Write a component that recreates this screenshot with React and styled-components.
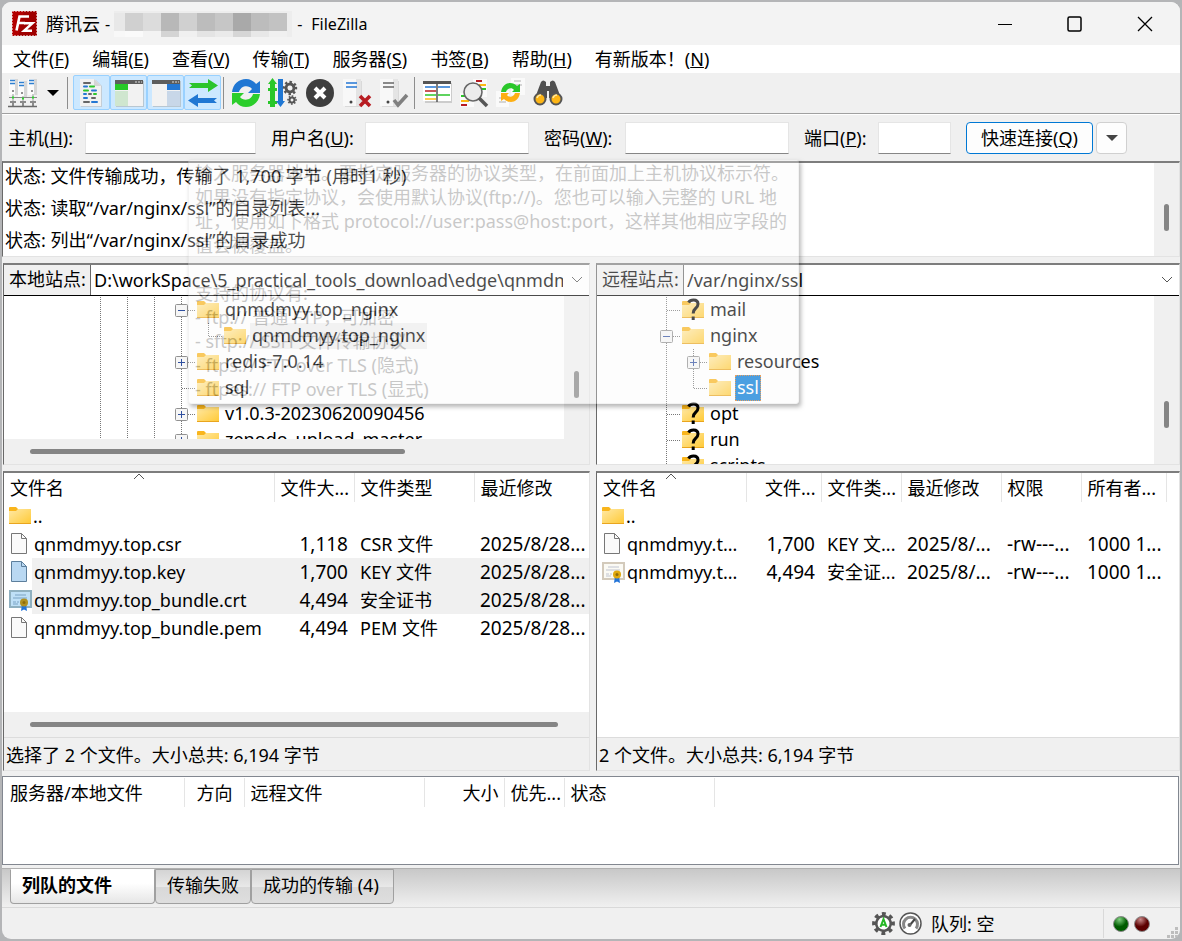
import * as React from "react";
import styled, { createGlobalStyle, css } from "styled-components";

const GlobalStyle = createGlobalStyle`
  * {
    box-sizing: border-box;
  }

  body {
    margin: 0;
    background: #b4b5b7;
    color: #000;
    font-family: "Noto Sans", "Noto Sans CJK SC", sans-serif;
    font-size: 18px;
    line-height: 26px;
  }

  button,
  input,
  select {
    font: inherit;
    color: inherit;
  }
`;

const Desktop = styled.div`
  padding: 2px;
`;

const Window = styled.div`
  display: flex;
  flex-direction: column;
  min-height: calc(100vh - 4px);
  background: #f0f0f0;
  border-radius: 9px;
  overflow: hidden;
`;

/* title bar */

const TitleBar = styled.header`
  display: flex;
  align-items: center;
  height: 43px;
  padding-left: 10px;
  background: #f3f3f3;
`;

const Title = styled.h1`
  display: flex;
  align-items: center;
  flex: 1;
  margin: 0 0 0 9px;
  font-size: 18px;
  font-weight: normal;
  line-height: 24px;
`;

const TitleLatin = styled.span`
  font-size: 16px;
  padding: 0 4px 0 5px;
`;

const WindowButton = styled.button`
  display: flex;
  align-items: center;
  justify-content: center;
  width: 70px;
  height: 43px;
  padding: 0;
  border: 0;
  background: none;
`;

/* menu */

const MenuBar = styled.nav`
  display: flex;
  height: 28px;
  background: #fff;
`;

const MenuItem = styled.button`
  padding: 0 12px 0 11px;
  border: 0;
  background: none;
  white-space: nowrap;
`;

/* tool bar */

const ToolBar = styled.div`
  display: flex;
  align-items: center;
  height: 42px;
  padding: 0 0 2px 2px;
  border-bottom: 1px solid #fff;
  box-shadow: inset 0 -1px 0 #a0a0a0;
`;

const ToolButton = styled.button`
  display: flex;
  align-items: center;
  justify-content: center;
  width: 37px;
  height: 35px;
  padding: 0;
  border: 1px solid ${p => (p.$on ? "#99d1ff" : "transparent")};
  border-radius: 2px;
  background: ${p => (p.$on ? "#cce8ff" : "none")};
`;

const ToolArrow = styled(ToolButton)`
  width: 24px;
`;

const Separator = styled.span`
  width: 1px;
  height: 32px;
  margin: 0 ${p => (p.$wide ? 5 : 3)}px 0 2px;
  background: #8d8d8d;
`;

/* quick connect */

const QuickBar = styled.form`
  position: relative;
  display: flex;
  align-items: center;
  height: 46px;
  padding-left: 6px;
`;

const FieldLabel = styled.label`
  width: ${p => p.$width}px;
  white-space: nowrap;
`;

const Field = styled.input`
  width: ${p => p.$width}px;
  height: 32px;
  margin-right: 15px;
  padding: 0 6px;
  border: 1px solid #e5e5e5;
  border-bottom-color: #868686;
  background: #fff;
  outline: none;
`;

const ConnectButton = styled.button`
  width: 127px;
  height: 32px;
  padding: 0;
  border: 1px solid #0078d4;
  border-radius: 4px;
  background: #fdfdfd;
`;

const ConnectArrow = styled(ConnectButton)`
  display: flex;
  align-items: center;
  justify-content: center;
  width: 31px;
  margin-left: 3px;
  border-color: #d0d0d0;
`;

const Tooltip = styled.div`
  position: absolute;
  z-index: 2;
  top: 44px;
  left: 186px;
  padding: 1px 6px;
  width: 611px;
  height: 245px;
  border: 1px solid #d8d8d8;
  border-radius: 3px;
  background: #f9f9f9;
  color: #4a4a4a;
  opacity: 0.3;
  box-shadow: 2px 3px 4px rgba(0, 0, 0, 0.9);
  line-height: 24px;
  white-space: pre;
  pointer-events: none;
`;

/* panes */

const sunken = css`
  border: 1px solid #e3e3e3;
  border-top: 2px solid #7d7d7d;
  border-left-color: #696969;
  background: #fff;
`;

const Log = styled.div`
  display: flex;
  ${sunken}
`;

const LogLines = styled.div`
  display: flex;
  flex: 1;
  flex-direction: column;
  gap: 6px;
  padding: 0 0 3px 2px;
`;

const Gutter = styled.div`
  width: 25px;
  background: #f0f0f0;
`;

const Thumb = styled.div`
  width: 5px;
  height: 27px;
  margin: ${p => p.$top}px 0 0 10px;
  border-radius: 3px;
  background: #858585;
`;

const HorizontalGutter = styled.div`
  flex: none;
  height: 25px;
  padding: 10px 31px 0 26px;
  background: #f0f0f0;
`;

const HorizontalThumb = styled.div`
  width: ${p => p.$percent}%;
  height: 5px;
  border-radius: 3px;
  background: #858585;
`;

const Split = styled.div`
  display: grid;
  grid-template-columns: minmax(0, 587fr) minmax(0, 584fr);
  gap: 6px;
  margin: 6px 0 0 1px;
  flex: ${p => (p.$grow ? 1 : "none")};
`;

const Pane = styled.section`
  display: flex;
  flex-direction: column;
  ${sunken}
`;

const SiteBar = styled.div`
  display: flex;
  height: 31px;
  border-bottom: 1px solid #000;
`;

const SiteLabel = styled.label`
  width: 87px;
  padding: 1px 0 0 5px;
  border-right: 1px solid #696969;
  background: #f0f0f0;
  white-space: nowrap;
`;

const Combo = styled.div`
  display: grid;
  flex: 1;
  min-width: 0;
  align-items: center;

  > * {
    grid-area: 1 / 1;
  }

  svg {
    justify-self: end;
    margin-right: 5px;
    pointer-events: none;
  }
`;

const SiteSelect = styled.select`
  appearance: none;
  width: 100%;
  height: 30px;
  padding: 0 26px 0 3px;
  border: 0;
  background: #fff;
  outline: none;
`;

const TreeArea = styled.div`
  display: flex;
  height: ${p => (p.$scroll ? 143 : 168)}px;
`;

const Tree = styled.div`
  flex: 1;
  min-width: 0;
  overflow: hidden;
  padding: 1px 0 0 ${p => p.$indent}px;
`;

const TreeRow = styled.div`
  display: flex;
  align-items: center;
  height: 26px;

  svg {
    flex: none;
  }
`;

const TreeIcon = styled.span`
  display: flex;
  margin: 0 4px 0 2px;
`;

const TreeLabel = styled.span`
  padding: 0 2px;
  height: 26px;
  line-height: 25px;
  white-space: nowrap;
  ${p => p.$state === "dim" && "background: #f0f0f0;"}
  ${p =>
    p.$state === "active" &&
    `
    background: #0078d7;
    color: #fff;
    outline: 1px dotted #e07b20;
    outline-offset: -1px;
  `}
`;

/* file lists */

const ListArea = styled.div`
  flex: 1;
  background: #fff;
  overflow: hidden;
`;

const FileTable = styled.table`
  width: ${p => (p.$fixed ? `${p.$fixed}px` : "100%")};
  border-collapse: collapse;
  table-layout: fixed;
`;

const HeadCell = styled.th`
  position: relative;
  height: 29px;
  padding: 0 5px 0 6px;
  border-right: 1px solid #e5e5e5;
  font-weight: normal;
  text-align: ${p => p.$align || "left"};
  white-space: nowrap;

  &:last-child {
    border-right-color: ${p => (p.$open ? "transparent" : "#e5e5e5")};
  }
`;

const SortMark = styled.svg`
  position: absolute;
  top: 0;
  left: calc(50% - 6px);
`;

const Cell = styled.td`
  height: 28px;
  padding: 0 0 0 6px;
  font-size: ${p => (p.$latin ? 19 : 18)}px;
  text-align: ${p => p.$align || "left"};
  padding-right: ${p => (p.$align ? 6 : 0)}px;
  background: ${p => (p.$selected ? "#f0f0f0" : "none")};
  white-space: nowrap;
`;

const NameCell = styled(Cell)`
  padding: 0;
  background: ${p =>
    p.$selected ? "linear-gradient(to right, #fff 28px, #f0f0f0 28px)" : "none"};
`;

const FileName = styled.div`
  display: flex;
  align-items: center;
  gap: 2px;
  padding-left: 5px;
`;

const ListStatus = styled.div`
  height: 33px;
  padding: 4px 0 0 2px;
  border-top: 1px solid #dcdcdc;
  background: #f0f0f0;
`;

/* queue and tabs */

const Queue = styled.section`
  height: 89px;
  margin: 5px 1px 0 0;
  padding: 1px 0 0 1px;
  border: 1px solid #828790;
  background: #fff;
`;

const TabStrip = styled.div`
  display: flex;
  align-items: flex-start;
  height: 39px;
  margin-top: 3px;
  padding-left: 8px;
  border-top: 1px solid #b0b0b0;
  background: linear-gradient(#c8c8c8, #f0f0f0);
`;

const Tab = styled.button`
  height: 35px;
  padding: 0 ${p => (p.$active ? 42 : 14)}px 4px 11px;
  border: 1px solid #a0a0a0;
  border-top-color: ${p => (p.$active ? "#fff" : "#a0a0a0")};
  border-radius: 0 0 4px 4px;
  background: ${p =>
    p.$active
      ? "linear-gradient(#fff 40%, #e6e6e6)"
      : "linear-gradient(#d4d4d4, #e8e8e8 50%, #d8d8d8 50%, #dedede)"};
  font-weight: ${p => (p.$active ? "bold" : "normal")};
  white-space: nowrap;
`;

const NarrowTab = styled(Tab)`
  padding: 0 11px 4px;
`;

const StatusBar = styled.footer`
  display: flex;
  align-items: center;
  justify-content: flex-end;
  gap: 4px;
  height: 32px;
  border-top: 1px solid #d9d9d9;
`;

const QueueState = styled.span`
  width: 173px;
  padding-left: 5px;
`;

const Lamps = styled.span`
  display: flex;
  align-items: center;
  gap: 5px;
  height: 29px;
  padding: 0 2px 0 9px;
  border-left: 1px solid #d9d9d9;
`;

const Grip = styled.svg`
  align-self: flex-end;
  margin-left: 11px;
`;

/* mosaic colours over the hidden address */
const MOSAIC = [
  "#e8e8e8", "#d0d0d0", "#dcdcdc", "#b8b8b8", "#d0d0d0",
  "#bcbcbc", "#c6c6c6", "#a9a9a9", "#bcbcbc", "#c2c2c2"
];
const MOSAIC_LOW = [
  "#f8f8f8", "#fafafa", "#f3f3f3", "#d4d4d4", "#f0f0f0",
  "#e4e4e4", "#eaeaea", "#d6d6d6", "#e8e8e8", "#f0f0f0"
];

function Mosaic() {
  return (
    <svg width="178" height="26" viewBox="0 0 178 26">
      <rect width="178" height="26" fill="#ededed" />
      {MOSAIC.map((color, i) => (
        <g key={i}>
          <rect x={i * 18 - 7} y="2" width="18" height="18" fill={color} />
          <rect x={i * 18 - 7} y="20" width="18" height="6" fill={MOSAIC_LOW[i]} />
        </g>
      ))}
    </svg>
  );
}

function Logo() {
  return (
    <svg width="25" height="25" viewBox="0 0 25 25">
      <rect width="25" height="25" fill="#b30000" />
      <path d="M12 0h13v25H6z" fill="#8c0000" opacity=".5" />
      <rect x=".5" y=".5" width="24" height="24" fill="none" stroke="#fff" strokeDasharray="1 2" />
      <g fill="none" stroke="#fff" strokeWidth="2.6">
        <path d="M4.5 19.5 7.5 5.5H17M6 12h7" />
        <path d="M12 12.2h8.5L12 19.8h8" strokeWidth="2.4" />
      </g>
    </svg>
  );
}

function Folder({ unknown }) {
  return (
    <svg width="22" height="26" viewBox="0 0 22 26">
      <defs>
        <linearGradient id="folder" x1="0" y1="0" x2="1" y2="1">
          <stop offset="0" stopColor="#ffe9a6" />
          <stop offset="1" stopColor="#ffc934" />
        </linearGradient>
      </defs>
      <path d="M0 5q0-1 1-1h6l2 2h13v3H0z" fill="#f9b51c" />
      <path d="M0 8h7l2-2h13v15H0z" fill="url(#folder)" />
      <path d="M0 20.5h22" stroke="#e9a51e" />
      {unknown && (
        <g fill="none" stroke="#000" strokeWidth="3">
          <path d="M6.5 5.5Q8 3 11.500 3q4.500 0 4.500 4 0 2.500-2.500 4.500-2.300 1.800-2.300 5" />
          <path d="M11.200 19.500v3.500" />
        </g>
      )}
    </svg>
  );
}

function Guide({ kind }) {
  const box = kind === "plus" || kind === "minus";
  return (
    <svg width="27" height="26" viewBox="0 0 27 26">
      <g stroke="#777" strokeDasharray="1 1">
        <path d={kind === "end" ? "M13.500 0v13" : "M13.500 0v26"} />
        {kind !== "line" && <path d="M14 13.500h13" />}
      </g>
      {box && (
        <>
          <rect x="7.500" y="7.500" width="12" height="12" rx="1" fill="#f6f6f6" stroke="#919191" />
          <path
            d={kind === "plus" ? "M10 13.500h7M13.500 10v7" : "M10 13.500h7"}
            stroke="#2f4f9f"
          />
        </>
      )}
    </svg>
  );
}

function Page({ blue }) {
  return (
    <svg width="23" height="26" viewBox="0 0 23 26">
      <path
        d="M2.500 2.500h10l5 5v15h-15z"
        fill={blue ? "#b9d8f2" : "#fafafa"}
        stroke={blue ? "#5d7f9c" : "#777"}
      />
      <path d="M12.500 2.500v5h5" fill="none" stroke={blue ? "#5d7f9c" : "#777"} />
    </svg>
  );
}

function Certificate({ blue }) {
  return (
    <svg width="23" height="26" viewBox="0 0 23 26">
      <rect
        x="1"
        y="4"
        width="21"
        height="16"
        fill={blue ? "#bfe0f7" : "#fbfaf4"}
        stroke={blue ? "#8fb0c0" : "#d3cabb"}
        strokeWidth="2"
      />
      <path
        d="M6 8h11M4 11h14M4 15h3m1 0h2M4 17h5"
        stroke={blue ? "#7ba3c4" : "#c0c4d0"}
      />
      <path d="M13 17l-1 7 3-1.500L18 24l-1-7z" fill="#2374d8" />
      <circle cx="15" cy="15.500" r="4" fill={blue ? "#b09020" : "#e0a80d"} />
      <circle cx="15" cy="15.500" r="1.500" fill="#8e6b0a" />
    </svg>
  );
}

function Chevron() {
  return (
    <svg width="14" height="8" viewBox="0 0 14 8">
      <path d="M2 1l5 5 5-5" fill="none" stroke="#555" />
    </svg>
  );
}

function Caret({ color }) {
  return (
    <svg width="14" height="8" viewBox="0 0 14 8">
      <path d="M1 1h12L7 7z" fill={color} />
    </svg>
  );
}

/* ring of eight teeth round a solid body, the hole is left to the caller */
function Gear({ x, y, r, hole }) {
  const tooth = (Math.PI * 2 * r) / 16;
  return (
    <g transform={`translate(${x} ${y}) rotate(-11)`} fill="none">
      <circle r={r} stroke="#555" strokeWidth={r * 0.4} strokeDasharray={tooth} />
      <circle r={(r * 0.9 + hole) / 2} stroke="#555" strokeWidth={r * 0.9 - hole} />
    </g>
  );
}

function Icon({ children }) {
  return (
    <svg width="30" height="30" viewBox="0 0 30 30">
      {children}
    </svg>
  );
}

const serverBody = (
  <>
    <path d="M3 3h17v26H3z" fill="#d9d9d9" />
    <path d="M1 1h18v27H1z" fill="#f8f8f8" />
    <path d="M14 1h5v27h-5z" fill="#e4e4e4" />
  </>
);

const icons = {
  sites: (
    <Icon>
      {[1, 10, 20].map((x, i) => (
        <g key={x} transform={`translate(${x} ${i === 1 ? 3 : 1})`}>
          <path d="M0 0h6v16H0z" fill="#fbfbfb" />
          <path d="M6 0h3v16H6z" fill="#d6d6d6" />
          <path d="M1 1.500h5M1 4.500h5" stroke="#2f7fd0" strokeWidth="1.300" />
          <path d="M4 11v2" stroke="#555" strokeWidth="1.300" />
        </g>
      ))}
      <path d="M5 16v7M15 18v5M25 16v7" stroke="#999" />
      <path d="M1 19.500h28" stroke="#888" />
      <path d="M2 24h6M12 24h6M22 24h6M0 28.500h29M5 25v3M15 25v3M25 25v3" stroke="#6a6a6a" strokeWidth="1.500" />
      <path d="M4 19.500h2M14 20.500h2M24 19.500h2" stroke="#2bd42b" strokeWidth="2" />
    </Icon>
  ),
  log: (
    <Icon>
      <path d="M4 2h15l6 6v21H4z" fill="#c3cdd6" />
      <path d="M3 1h14l7 7v20H3z" fill="#f1f1f1" />
      <path d="M17 1v7h7z" fill="#d5d5d5" />
      <g strokeWidth="2" strokeLinecap="round">
        <path d="M7 5h6M12 16h2M15 20h3M7 24h5" stroke="#666" />
        <path d="M7 8.500h3M15 12.500h4M7 16h2M7 20h3M15 24h5" stroke="#2477d3" />
        <path d="M13 8.500h4M7 12.500h4M17 16h2" stroke="#2bc52b" />
      </g>
    </Icon>
  ),
  localTree: (
    <Icon>
      <path d="M2 3h28v26H2z" fill="#b8c7d2" />
      <path d="M1 2h28v26H1z" fill="#f2f2f2" />
      <path d="M1 2h28v4H1z" fill="#5d5d5d" />
      <path d="M1 6h13v6H1z" fill="#27c827" />
      <path d="M1 13h13v15H1z" fill="#cfe6cf" />
      <path d="M21 4h2m1 0h2m1 0h1" stroke="#ddd" />
    </Icon>
  ),
  remoteTree: (
    <Icon>
      <path d="M2 3h28v26H2z" fill="#b8c7d2" />
      <path d="M1 6h28v22H1z" fill="#f2f2f2" />
      <path d="M1 2h28v4H1z" fill="#5d5d5d" />
      <path d="M16 6h13v6H16z" fill="#2477d3" />
      <path d="M16 13h13v15H16z" fill="#c8d7e8" />
      <path d="M21 4h2m1 0h2m1 0h1" stroke="#ddd" />
    </Icon>
  ),
  queue: (
    <Icon>
      <path d="M1 5h19V1l10 6.500L20 14v-4H1l3-2.500z" fill="#2cc52c" />
      <path d="M29 20H10v-4L0 22.500 10 29v-4h19l-3-2.500z" fill="#2077d3" />
    </Icon>
  ),
  refresh: (
    <Icon>
      <path d="M1 14C2 6 8 1 15 1c4 0 8 2 10 5l4-3v12H17l4-4c-3-4-11-4-13 3z" fill="#2077d3" />
      <path d="M29 16c-1 8-7 13-14 13-4 0-8-2-10-5l-4 3V15h12l-4 4c3 4 11 4 13-3z" fill="#2cce2c" />
    </Icon>
  ),
  process: (
    <Icon>
      <path d="M4.500 0 9 6H7v4h2v3H7v10h2v3H7v3H2v-3H0v-3h2V13H0v-3h2V6H0z" fill="#2ac72a" />
      <path d="M12.500 29 17 23h-2V1h-5v22H8z" fill="#2077d3" />
      <Gear x={22} y={10} r={6} hole={2.5} />
      <Gear x={24} y={22} r={4} hole={1.5} />
    </Icon>
  ),
  cancel: (
    <Icon>
      <circle cx="15" cy="15" r="14" fill="#3e3e3e" />
      <path d="M10 10l10 10M20 10L10 20" stroke="#fff" strokeWidth="4" />
    </Icon>
  ),
  disconnect: (
    <Icon>
      {serverBody}
      <path d="M4 5h11M4 9h11" stroke="#2477d3" strokeWidth="1.600" />
      <circle cx="9" cy="24" r="1.500" fill="#444" />
      <path d="M18 18l10 10M28 18L18 28" stroke="#b81c22" strokeWidth="3.600" />
    </Icon>
  ),
  reconnect: (
    <Icon>
      {serverBody}
      <path d="M4 5h11M4 9h11" stroke="#666" strokeWidth="1.600" />
      <circle cx="9" cy="24" r="1.500" fill="#444" />
      <path d="M15 22l4 5 9-10" fill="none" stroke="#808080" strokeWidth="3.600" />
    </Icon>
  ),
  filter: (
    <Icon>
      <path d="M3 5h27v20H3z" fill="#ccc" />
      <path d="M1 3h28v20H1z" fill="#fff" />
      <path d="M1 3h28v3H1z" fill="#555" />
      <g strokeWidth="1.500">
        <path d="M3 9h11m2 0h12" stroke="#2477d3" />
        <path d="M3 13h11" stroke="#b81c22" />
        <path d="M3 17h11m2 0h12" stroke="#2bc52b" />
        <path d="M3 21h11" stroke="#fdb913" />
      </g>
      <path d="M15 3v21" stroke="#555" strokeWidth="1.500" />
    </Icon>
  ),
  compare: (
    <Icon>
      <path d="M14 1h14v18H14zM1 15h14v14H1z" fill="#fafafa" />
      <g strokeWidth="2">
        <path d="M17 3h6M2 27h6" stroke="#b81c22" />
        <path d="M20 7h7M2 23h8" stroke="#fdb913" />
        <path d="M22 11h5M2 18h6" stroke="#2bc52b" />
      </g>
      <circle cx="14" cy="14" r="9" fill="#ececec" stroke="#666" strokeWidth="1.600" />
      <path d="M20 20l8 8" stroke="#555" strokeWidth="3.500" />
    </Icon>
  ),
  sync: (
    <Icon>
      <path d="M15 0h14v17H15zM0 13h13v16H0z" fill="#fafafa" />
      <path d="M18 3h7m-7 4h8M3 20h6m-6 4h7" stroke="#d5d5d5" strokeWidth="2" />
      <path d="M5 14C6 8 10 5 14 5c3 0 5 1 7 3l3-2v8h-8l2-2c-2-3-7-2-8 2z" fill="#2ac72a" />
      <path d="M24 15c-1 6-5 9-9 9-3 0-5-1-7-3l-3 2v-8h8l-2 2c2 3 7 2 8-2z" fill="#fdaf13" />
    </Icon>
  ),
  search: (
    <Icon>
      <path d="M8 4q2-3 5 0v4h4V4q3-3 5 0l6 16H16v-7h-2v7H2z" fill="#505050" />
      <circle cx="7" cy="21" r="5.500" fill="#fdb515" stroke="#555" strokeWidth="2" />
      <circle cx="23" cy="21" r="5.500" fill="#fdb515" stroke="#555" strokeWidth="2" />
      <path d="M4 20q1-3 4-3m12 3q1-3 4-3" stroke="#ffe9a0" strokeWidth="1.500" fill="none" />
    </Icon>
  )
};

const menus = [
  ["文件", "F"],
  ["编辑", "E"],
  ["查看", "V"],
  ["传输", "T"],
  ["服务器", "S"],
  ["书签", "B"],
  ["帮助", "H"],
  ["有新版本！", "N"]
];

const fields = [
  { id: "host", text: "主机", hotkey: "H", label: 77, width: 171 },
  { id: "user", text: "用户名", hotkey: "U", label: 94, width: 164 },
  { id: "pass", text: "密码", hotkey: "W", label: 81, width: 164, type: "password" },
  { id: "port", text: "端口", hotkey: "P", label: 74, width: 73 }
];

const tooltip = [
  "输入服务器地址。要指定服务器的协议类型，在前面加上主机协议标示符。",
  "如果没有指定协议，会使用默认协议(ftp://)。您也可以输入完整的 URL 地",
  "址，使用如下格式 protocol://user:pass@host:port，这样其他相应字段的",
  "值会被覆盖。",
  "",
  "支持的协议有:",
  "- ftp:// 普通 FTP，可加密",
  "- sftp:// SSH 文件传输协议",
  "- ftps:// FTP over TLS (隐式)",
  "- ftpes:// FTP over TLS (显式)"
].join("\n");

const log = [
  "状态: 文件传输成功，传输了 1,700 字节 (用时1 秒)",
  "状态: 读取“/var/nginx/ssl”的目录列表...",
  "状态: 列出“/var/nginx/ssl”的目录成功"
];

const outer = ["line", "line", "line"];

const localTree = [
  { name: "qnmdmyy.top_nginx", guides: [...outer, "minus"] },
  { name: "qnmdmyy.top_nginx", guides: [...outer, "line", "end"], state: "dim" },
  { name: "redis-7.0.14", guides: [...outer, "plus"] },
  { name: "sql", guides: [...outer, "tee"] },
  { name: "v1.0.3-20230620090456", guides: [...outer, "plus"] },
  { name: "zenodo_upload_master", guides: [...outer, "plus"] }
];

const remoteTree = [
  { name: "mail", guides: ["tee"], unknown: true },
  { name: "nginx", guides: ["minus"] },
  { name: "resources", guides: ["line", "plus"] },
  { name: "ssl", guides: ["line", "end"], state: "active" },
  { name: "opt", guides: ["tee"], unknown: true },
  { name: "run", guides: ["tee"], unknown: true },
  { name: "scripts", guides: ["tee"], unknown: true }
];

const localColumns = [
  { text: "文件名", width: 270, sorted: true },
  { text: "文件大...", width: 80, align: "right", latin: true },
  { text: "文件类型", width: 120 },
  { text: "最近修改", latin: true }
];

const localFiles = [
  { icon: <Folder />, cells: ["..", "", "", ""] },
  { icon: <Page />, cells: ["qnmdmyy.top.csr", "1,118", "CSR 文件", "2025/8/28..."] },
  {
    icon: <Page blue />,
    cells: ["qnmdmyy.top.key", "1,700", "KEY 文件", "2025/8/28..."],
    selected: true
  },
  {
    icon: <Certificate blue />,
    cells: ["qnmdmyy.top_bundle.crt", "4,494", "安全证书", "2025/8/28..."],
    selected: true
  },
  { icon: <Page />, cells: ["qnmdmyy.top_bundle.pem", "4,494", "PEM 文件", "2025/8/28..."] }
];

const remoteColumns = [
  { text: "文件名", width: 149, sorted: true },
  { text: "文件...", width: 75, align: "right", latin: true },
  { text: "文件类...", width: 80 },
  { text: "最近修改", width: 100, latin: true },
  { text: "权限", width: 80, latin: true },
  { text: "所有者...", width: 85, latin: true }
];

const remoteFiles = [
  { icon: <Folder />, cells: ["..", "", "", "", "", ""] },
  {
    icon: <Page />,
    cells: ["qnmdmyy.t...", "1,700", "KEY 文...", "2025/8/...", "-rw---...", "1000 1..."]
  },
  {
    icon: <Certificate />,
    cells: ["qnmdmyy.t...", "4,494", "安全证...", "2025/8/...", "-rw---...", "1000 1..."]
  }
];

const queueColumns = [
  { text: "服务器/本地文件", width: 180 },
  { text: "方向", width: 60, align: "center" },
  { text: "远程文件", width: 180 },
  { text: "大小", width: 80, align: "right" },
  { text: "优先...", width: 60 },
  { text: "状态", width: 150 }
];

function Hotkey({ text, letter }) {
  return (
    <>
      {text}(<u>{letter}</u>)
    </>
  );
}

function Tool({ name, label, on }) {
  return (
    <ToolButton type="button" aria-label={label} $on={on}>
      {icons[name]}
    </ToolButton>
  );
}

function SiteTree({ id, label, path, rows, indent, thumb, scroll }) {
  return (
    <Pane>
      <SiteBar>
        <SiteLabel htmlFor={id}>{label}</SiteLabel>
        <Combo>
          <SiteSelect id={id}>
            <option>{path}</option>
          </SiteSelect>
          <Chevron />
        </Combo>
      </SiteBar>
      <TreeArea $scroll={scroll}>
        <Tree $indent={indent}>
          {rows.map((row, i) => (
            <TreeRow key={i}>
              {row.guides.map((kind, n) => (
                <Guide kind={kind} key={n} />
              ))}
              <TreeIcon>
                <Folder unknown={row.unknown} />
              </TreeIcon>
              <TreeLabel $state={row.state}>{row.name}</TreeLabel>
            </TreeRow>
          ))}
        </Tree>
        <Gutter>
          <Thumb $top={thumb} />
        </Gutter>
      </TreeArea>
      {scroll && (
        <HorizontalGutter>
          <HorizontalThumb $percent={71} />
        </HorizontalGutter>
      )}
    </Pane>
  );
}

function DataTable({ columns, files = [] }) {
  const open = columns.some(column => !column.width);
  const total = columns.reduce((sum, column) => sum + (column.width || 0), 0);
  return (
    <FileTable $fixed={open ? 0 : total}>
      <colgroup>
        {columns.map(column => (
          <col key={column.text} width={column.width} />
        ))}
      </colgroup>
      <thead>
        <tr>
          {columns.map(column => (
            <HeadCell key={column.text} $align={column.align} $open={open}>
              {column.text}
              {column.sorted && (
                <SortMark width="12" height="7" viewBox="0 0 12 7">
                  <path d="M1 6l5-5 5 5" fill="none" stroke="#555" />
                </SortMark>
              )}
            </HeadCell>
          ))}
        </tr>
      </thead>
      <tbody>
        {files.map((file, i) => (
          <tr key={i}>
            <NameCell $selected={file.selected}>
              <FileName>
                {file.icon}
                {file.cells[0]}
              </FileName>
            </NameCell>
            {file.cells.slice(1).map((text, n) => (
              <Cell
                key={n}
                $align={columns[n + 1].align}
                $latin={columns[n + 1].latin}
                $selected={file.selected}
              >
                {text}
              </Cell>
            ))}
          </tr>
        ))}
      </tbody>
    </FileTable>
  );
}

function Lamp({ id, light, dark }) {
  return (
    <svg width="16" height="16" viewBox="0 0 16 16">
      <defs>
        <radialGradient id={id} cx=".4" cy=".2" r=".8">
          <stop offset="0" stopColor={light} />
          <stop offset=".6" stopColor={dark} />
        </radialGradient>
      </defs>
      <circle cx="8" cy="8" r="7.500" fill={`url(#${id})`} stroke="#8a8a8a" />
    </svg>
  );
}

export default function App() {
  return (
    <Desktop>
      <GlobalStyle />
      <Window>
        <TitleBar>
          <Logo />
          <Title>
            腾讯云<TitleLatin>-</TitleLatin>
            <Mosaic />
            <TitleLatin>-</TitleLatin>
            <TitleLatin>FileZilla</TitleLatin>
          </Title>
          <WindowButton aria-label="最小化">
            <svg width="16" height="16" viewBox="0 0 16 16">
              <path d="M1 8.500h14" stroke="#000" />
            </svg>
          </WindowButton>
          <WindowButton aria-label="最大化">
            <svg width="16" height="16" viewBox="0 0 16 16">
              <rect x="1" y="1" width="13" height="14" rx="1.500" fill="none" stroke="#000" strokeWidth="1.500" />
            </svg>
          </WindowButton>
          <WindowButton aria-label="关闭">
            <svg width="16" height="16" viewBox="0 0 16 16">
              <path d="M1 1l14 14M15 1L1 15" stroke="#000" strokeWidth="1.300" />
            </svg>
          </WindowButton>
        </TitleBar>

        <MenuBar>
          {menus.map(([text, letter]) => (
            <MenuItem key={letter}>
              <Hotkey text={text} letter={letter} />
            </MenuItem>
          ))}
        </MenuBar>

        <ToolBar>
          <Tool name="sites" label="站点管理器" />
          <ToolArrow type="button" aria-label="站点列表">
            <Caret color="#000" />
          </ToolArrow>
          <Separator $wide />
          <Tool name="log" label="消息日志" on />
          <Tool name="localTree" label="本地目录树" on />
          <Tool name="remoteTree" label="远程目录树" on />
          <Tool name="queue" label="传输队列" on />
          <Separator />
          <Tool name="refresh" label="刷新" />
          <Tool name="process" label="处理队列" />
          <Tool name="cancel" label="取消" />
          <Tool name="disconnect" label="断开" />
          <Tool name="reconnect" label="重新连接" />
          <Separator />
          <Tool name="filter" label="过滤器" />
          <Tool name="compare" label="目录对比" />
          <Tool name="sync" label="同步浏览" />
          <Tool name="search" label="查找文件" />
        </ToolBar>

        <QuickBar>
          {fields.map(field => (
            <React.Fragment key={field.id}>
              <FieldLabel htmlFor={field.id} $width={field.label}>
                <Hotkey text={field.text} letter={field.hotkey} />:
              </FieldLabel>
              <Field id={field.id} type={field.type || "text"} $width={field.width} />
            </React.Fragment>
          ))}
          <ConnectButton type="button">
            <Hotkey text="快速连接" letter="Q" />
          </ConnectButton>
          <ConnectArrow type="button" aria-label="历史记录">
            <Caret color="#444" />
          </ConnectArrow>
          <Tooltip role="tooltip">{tooltip}</Tooltip>
        </QuickBar>

        <Log>
          <LogLines>
            {log.map(line => (
              <div key={line}>{line}</div>
            ))}
          </LogLines>
          <Gutter>
            <Thumb $top={41} />
          </Gutter>
        </Log>

        <Split>
          <SiteTree
            id="local"
            label="本地站点:"
            path="D:\workSpace\5_practical_tools_download\edge\qnmdmyy.top_nginx"
            rows={localTree}
            indent={83}
            thumb={75}
            scroll
          />
          <SiteTree
            id="remote"
            label="远程站点:"
            path="/var/nginx/ssl"
            rows={remoteTree}
            indent={56}
            thumb={105}
          />
        </Split>

        <Split $grow>
          <Pane>
            <ListArea>
              <DataTable columns={localColumns} files={localFiles} />
            </ListArea>
            <HorizontalGutter>
              <HorizontalThumb $percent={100} />
            </HorizontalGutter>
            <ListStatus>选择了 2 个文件。大小总共: 6,194 字节</ListStatus>
          </Pane>
          <Pane>
            <ListArea>
              <DataTable columns={remoteColumns} files={remoteFiles} />
            </ListArea>
            <ListStatus>2 个文件。大小总共: 6,194 字节</ListStatus>
          </Pane>
        </Split>

        <Queue>
          <DataTable columns={queueColumns} />
        </Queue>

        <TabStrip>
          <Tab $active>列队的文件</Tab>
          <NarrowTab>传输失败</NarrowTab>
          <Tab>成功的传输 (4)</Tab>
        </TabStrip>

        <StatusBar>
          <svg width="23" height="23" viewBox="0 0 23 23">
            <circle cx="11.500" cy="11.500" r="7" fill="#fff" />
            <Gear x={11.5} y={11.5} r={9.5} hole={6} />
            <path d="M8.500 15l3-8 3 8M9.500 12.800h4" fill="none" stroke="#25b825" strokeWidth="2" />
          </svg>
          <svg width="23" height="23" viewBox="0 0 23 23">
            <circle cx="11.500" cy="11.500" r="10.500" fill="#fff" stroke="#555" strokeWidth="1.500" />
            <path d="M6 16.500a7 7 0 1 1 11 0" fill="none" stroke="#888" strokeWidth="3" />
            <path d="M10.500 13.500 16 7" stroke="#444" strokeWidth="2" />
            <circle cx="10.500" cy="13" r="2" fill="#666" />
          </svg>
          <QueueState>队列: 空</QueueState>
          <Lamps>
            <Lamp id="lampGreen" light="#7fd07f" dark="#005c00" />
            <Lamp id="lampRed" light="#c98a8a" dark="#5c0000" />
            <Grip width="12" height="12" viewBox="0 0 12 12">
              <path d="M9 1h3v3H9zM9 5h3v3H9zM9 9h3v3H9zM5 5h3v3H5zM5 9h3v3H5zM1 9h3v3H1z" fill="#bdbdbd" />
            </Grip>
          </Lamps>
        </StatusBar>
      </Window>
    </Desktop>
  );
}
